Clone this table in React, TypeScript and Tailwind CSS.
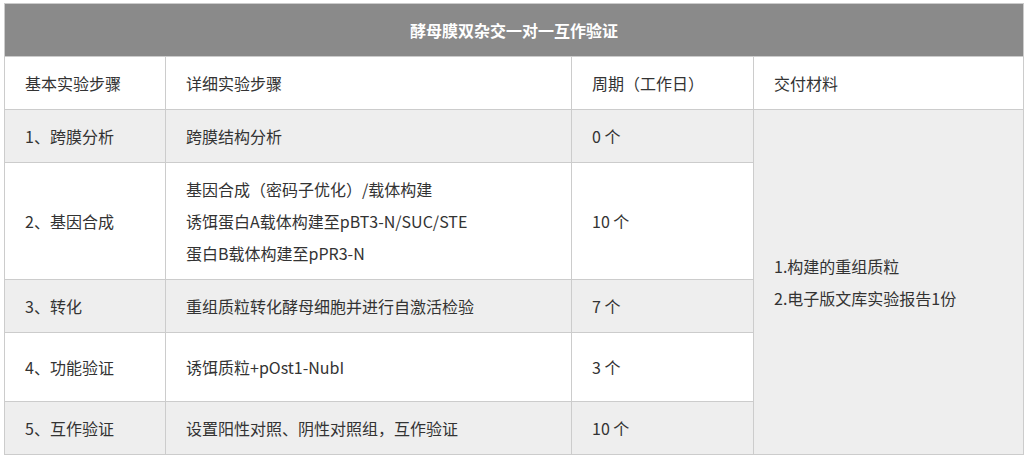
const rows = [
  { step: "1、跨膜分析", detail: ["跨膜结构分析"], period: "0 个", h: "h-[53px]", bg: "bg-[#eeeeee]" },
  {
    step: "2、基因合成",
    detail: ["基因合成（密码子优化）/载体构建", "诱饵蛋白A载体构建至pBT3-N/SUC/STE", "蛋白B载体构建至pPR3-N"],
    period: "10 个",
    h: "h-[117px]",
    bg: "bg-white",
  },
  { step: "3、转化", detail: ["重组质粒转化酵母细胞并进行自激活检验"], period: "7 个", h: "h-[53px]", bg: "bg-[#eeeeee]" },
  { step: "4、功能验证", detail: ["诱饵质粒+pOst1-NubI"], period: "3 个", h: "h-[69px]", bg: "bg-white" },
  { step: "5、互作验证", detail: ["设置阳性对照、阴性对照组，互作验证"], period: "10 个", h: "h-[53px]", bg: "bg-[#eeeeee]" },
]

const cell = "border-r border-b border-[#cccccc] pl-5 py-0 align-middle text-left"

export default function App() {
  return (
    <div className="bg-white w-[1028px] h-[459px] pl-[4px] pt-[3px] font-['Noto_Sans_CJK_SC',sans-serif] text-[16px] leading-[32px] text-[#333333]">
      <table className="table-fixed w-[1020px] border-separate border-spacing-0 border-l border-t border-[#cccccc]">
        <colgroup>
          <col className="w-[161px]" />
          <col className="w-[406px]" />
          <col className="w-[182px]" />
          <col className="w-[270px]" />
        </colgroup>
        <tbody>
          <tr>
            <td colSpan={4} className="h-[53px] border-r border-b border-[#cccccc] bg-[#8a8a8a] text-center align-middle font-bold text-white">
              酵母膜双杂交一对一互作验证
            </td>
          </tr>
          <tr className="bg-white">
            <td className={`${cell} h-[53px]`}>基本实验步骤</td>
            <td className={cell}>详细实验步骤</td>
            <td className={cell}>周期（工作日）</td>
            <td className={cell}>交付材料</td>
          </tr>
          {rows.map((r, i) => (
            <tr key={r.step} className={r.bg}>
              <td className={`${cell} ${r.h}`}>{r.step}</td>
              <td className={cell}>
                {r.detail.map((d) => (
                  <div key={d}>{d}</div>
                ))}
              </td>
              <td className={cell}>{r.period}</td>
              {i === 0 && (
                <td rowSpan={5} className={`${cell} bg-[#eeeeee]`}>
                  <div>1.构建的重组质粒</div>
                  <div>2.电子版文库实验报告1份</div>
                </td>
              )}
            </tr>
          ))}
        </tbody>
      </table>
    </div>
  )
}
